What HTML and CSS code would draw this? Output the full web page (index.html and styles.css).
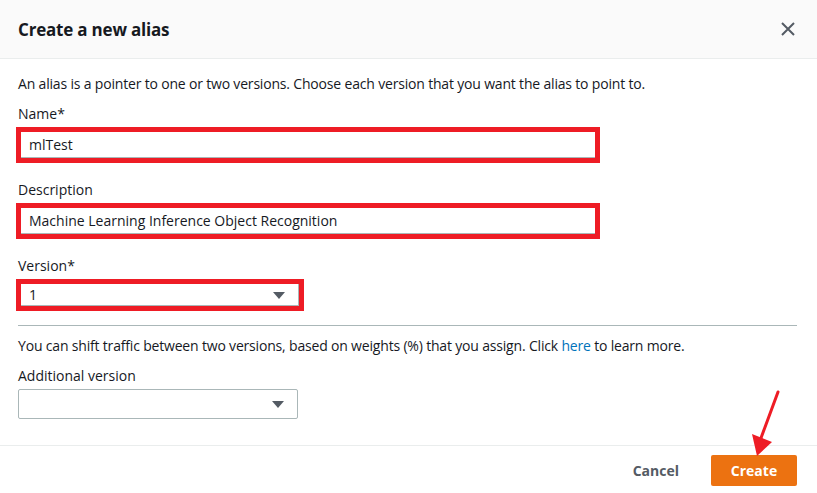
FILE: index.html
```html
<!DOCTYPE html>
<html>
<head>
<meta charset="utf-8">
<link rel="stylesheet" href="styles.css">
</head>
<body>
<div class="modal">
  <header class="hd">
    <h2 class="title">Create a new alias</h2>
    <span class="close" aria-label="Close">
      <svg width="14" height="14" viewBox="0 0 14 14"><path d="M1 1 L13 13 M13 1 L1 13" stroke="#545b64" stroke-width="2" fill="none"/></svg>
    </span>
  </header>
  <div class="bd">
    <p class="intro">An alias is a pointer to one or two versions. Choose each version that you want the alias to point to.</p>
    <div class="field first">
      <div class="label">Name*</div>
      <div class="hl wide"><div class="inp">mlTest</div></div>
    </div>
    <div class="field">
      <div class="label">Description</div>
      <div class="hl wide"><div class="inp">Machine Learning Inference Object Recognition</div></div>
    </div>
    <div class="field">
      <div class="label">Version*</div>
      <div class="hl narrow"><div class="inp sel-inp">1<span class="caret"></span></div></div>
    </div>
    <div class="divider"></div>
    <p class="note">You can shift traffic between two versions, based on weights (%) that you assign. Click <a class="link" href="#">here</a> to learn more.</p>
    <div class="field extra">
      <div class="label">Additional version</div>
      <div class="sel"><span class="caret"></span></div>
    </div>
  </div>
  <footer class="ft">
    <span class="btn-cancel">Cancel</span>
    <span class="btn-create">Create</span>
  </footer>
  <svg class="arrow" width="60" height="80" viewBox="0 0 60 80">
    <line x1="48" y1="6" x2="31" y2="52" stroke="#ee1c25" stroke-width="3" stroke-linecap="round"/>
    <polygon points="22,48 42,56 27,70" fill="#ee1c25"/>
  </svg>
</div>
</body>
</html>
```
FILE: styles.css
```css
* { box-sizing: border-box; }
html, body { margin: 0; padding: 0; background: #fff; }
body {
  font-family: "Open Sans", "Liberation Sans", Arial, sans-serif;
  font-size: 14px;
  color: #16191f;
  width: 817px;
  height: 493px;
  overflow: hidden;
}
.modal { position: relative; width: 817px; height: 493px; }
.hd {
  height: 59px;
  background: #fafafa;
  border-bottom: 1px solid #eaeded;
  display: flex;
  align-items: center;
  justify-content: space-between;
  padding: 0 22px 0 18px;
}
.title { margin: 0; font-size: 17px; font-weight: 700; letter-spacing: -0.2px; }
.close { display: flex; }
.bd { padding: 14px 20px 0 18px; }
.intro, .note { margin: 0; line-height: 22px; letter-spacing: -0.18px; }
.field { margin-top: 16px; }
.field.first { margin-top: 8px; }
.field.extra { margin-top: 8px; }
.label { line-height: 22px; margin-bottom: 2px; }
.hl {
  border: 5px solid #ee1c25;
  margin-left: -2px;
}
.wide { width: 584px; }
.narrow { width: 288px; }
.inp {
  height: 26px;
  border-bottom: 1px solid #aab7b8;
  background: #fff;
  padding-left: 8px;
  line-height: 26px;
  position: relative;
}
.narrow .inp { height: 22px; line-height: 22px; }
.sel-inp { border-right: 1px solid #aab7b8; }
.caret {
  position: absolute;
  right: 13px;
  top: 50%;
  margin-top: -3px;
  width: 0; height: 0;
  border-left: 6px solid transparent;
  border-right: 6px solid transparent;
  border-top: 7px solid #545b64;
}
.divider { height: 1px; background: #aab7b8; margin: 14px 0 9px; }
.sel {
  width: 280px;
  height: 30px;
  margin-top: 1px;
  border: 1px solid #aab7b8;
  border-radius: 2px;
  position: relative;
}
.sel .caret { right: 13px; }
.link { color: #0073bb; text-decoration: none; }
.ft {
  position: absolute;
  left: 0; right: 0; top: 445px;
  border-top: 1px solid #eaeded;
  display: flex;
  justify-content: flex-end;
  align-items: center;
  padding: 9px 20px 0 0;
  gap: 32px;
}
.btn-cancel { font-weight: 700; color: #545b64; }
.btn-create {
  background: #ec7211;
  color: #fff;
  font-weight: 700;
  width: 86px;
  height: 31px;
  border-radius: 2px;
  display: flex;
  align-items: center;
  justify-content: center;
}
.arrow { position: absolute; left: 730px; top: 386px; }
```
